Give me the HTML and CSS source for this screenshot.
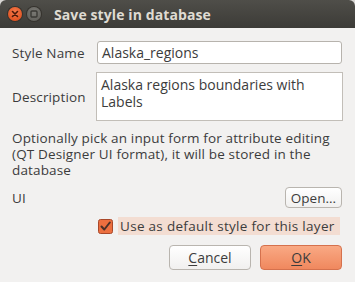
FILE: index.html
```html
<!DOCTYPE html>
<html lang="en">
<head>
    <meta charset="UTF-8">
    <meta name="viewport" content="width=device-width, initial-scale=1.0">
    <title>Save style in database</title>
    <link rel="stylesheet" href="styles.css">
</head>
<body>
    <div class="window">
        <div class="titlebar">
            <span class="win-btn close-btn">
                <svg width="14" height="14" viewBox="0 0 14 14"><path d="M4.5 4.5 L9.5 9.5 M9.5 4.5 L4.5 9.5" stroke="#4a1a0a" stroke-width="1.6" stroke-linecap="round"/></svg>
            </span>
            <span class="win-btn max-btn">
                <svg width="14" height="14" viewBox="0 0 14 14"><rect x="4" y="4" width="6" height="6" rx="1" fill="none" stroke="#3a3935" stroke-width="1.4"/></svg>
            </span>
            <span class="title">Save style in database</span>
        </div>

        <div class="content">
            <div class="row">
                <label class="label">Style Name</label>
                <div class="field">Alaska_regions</div>
            </div>
            <div class="row row-desc">
                <label class="label">Description</label>
                <div class="textarea">Alaska regions boundaries with Labels</div>
            </div>
            <p class="hint">Optionally pick an input form for attribute editing (QT Designer UI format), it will be stored in the database</p>
            <div class="row row-ui">
                <span class="label">UI</span>
                <button class="btn btn-open">Open...</button>
            </div>
            <div class="row row-check">
                <span class="checkbox">
                    <svg width="15" height="15" viewBox="0 0 15 15">
                        <rect x="0.5" y="0.5" width="14" height="14" rx="2" fill="#ec6f3f" stroke="#a9482a"/>
                        <path d="M3.5 7.5 L6.3 10.5 L11.8 3.5" fill="none" stroke="#4b3128" stroke-width="2" stroke-linecap="round" stroke-linejoin="round"/>
                    </svg>
                </span>
                <span class="check-label">Use as default style for this layer</span>
            </div>
            <div class="row row-buttons">
                <button class="btn btn-cancel"><u>C</u>ancel</button>
                <button class="btn btn-ok"><u>O</u>K</button>
            </div>
        </div>
    </div>
</body>
</html>
```

FILE: styles.css
```css
html, body {
    margin: 0;
    padding: 0;
    background: #d9d7d4;
}
body {
    font-family: "Open Sans", "Noto Sans", sans-serif;
    font-size: 13.5px;
    letter-spacing: 0.15px;
    color: #3c3c3c;
}
.window {
    width: 355px;
    height: 282px;
    background: #f2f1f0;
    border-radius: 6px 6px 0 0;
    overflow: hidden;
}
.titlebar {
    height: 28px;
    background: linear-gradient(#4f4e49, #3c3b37);
    display: flex;
    align-items: center;
    padding-left: 8px;
}
.win-btn {
    width: 14px;
    height: 14px;
    border-radius: 50%;
    display: flex;
    margin-right: 5px;
}
.close-btn {
    background: radial-gradient(circle at 50% 35%, #f5794a, #dc4815);
    box-shadow: 0 0 0 1px #35322d;
}
.max-btn {
    background: radial-gradient(circle at 50% 35%, #7a7974, #5c5b56);
    box-shadow: 0 0 0 1px #35322d;
}
.title {
    color: #dfdbd2;
    font-weight: bold;
    font-size: 14px;
    margin-left: 8px;
    letter-spacing: 0.1px;
}
.content {
    padding: 13px 13px 0 12px;
    display: flex;
    flex-direction: column;
}
.row {
    display: flex;
    align-items: center;
}
.label {
    width: 85px;
    flex-shrink: 0;
}
.field {
    flex: 1;
    height: 23px;
    box-sizing: border-box;
    border: 1px solid #b7b3ad;
    border-radius: 3px;
    background: #fff;
    padding: 0 4px;
    line-height: 21px;
    font-size: 14px;
    letter-spacing: 0;
}
.row-desc {
    margin-top: 8px;
}
.textarea {
    flex: 1;
    height: 49px;
    box-sizing: border-box;
    border: 1px solid #c2beb8;
    background: #fff;
    padding: 3px 4px;
    line-height: 17px;
    font-size: 14px;
    letter-spacing: 0;
    margin-left: -1px;
    margin-right: -1px;
}
.hint {
    margin: 9px 0 0;
    line-height: 16px;
}
.row-ui {
    margin-top: 9px;
    justify-content: space-between;
}
.btn {
    font-family: inherit;
    font-size: 13.5px;
    color: #3c3c3c;
    border: 1px solid #b9b5af;
    border-radius: 4px;
    background: linear-gradient(#ffffff, #f1f0ef);
    cursor: pointer;
    padding: 0;
}
.btn u {
    text-underline-offset: 2px;
}
.btn-open {
    width: 57px;
    height: 21px;
    line-height: 18px;
}
.row-check {
    margin-top: 9px;
    height: 18px;
    padding-left: 86px;
}
.checkbox {
    display: flex;
    width: 15px;
    height: 15px;
}
.check-label {
    margin-left: 5px;
    background: #f3ddd2;
    height: 18px;
    line-height: 18px;
    padding: 0 3px 0 2px;
    width: 217px;
    white-space: nowrap;
    letter-spacing: 0.3px;
}
.row-buttons {
    margin-top: 10px;
    justify-content: flex-end;
    gap: 9px;
}
.btn-cancel, .btn-ok {
    width: 82px;
    height: 25px;
    font-size: 14px;
}
.btn-ok {
    background: linear-gradient(#f9a984, #f0885e);
    border-color: #d5714d;
}
```
